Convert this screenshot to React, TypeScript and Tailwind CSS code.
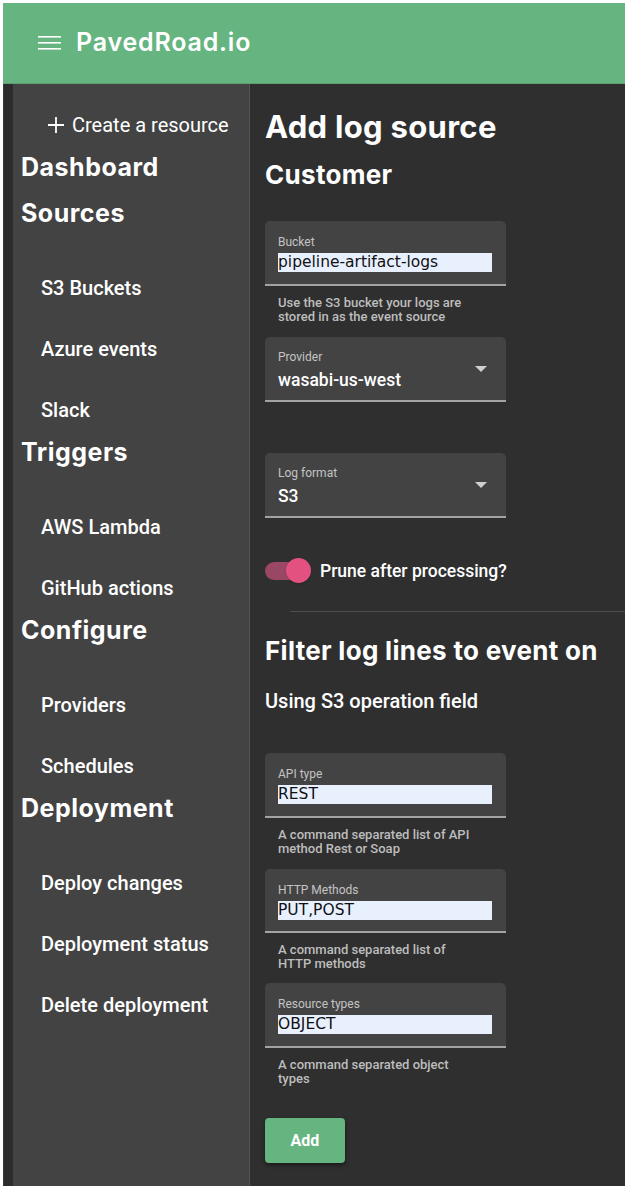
import React from "react";

const HEAD = { fontFamily: "Inter, 'DejaVu Sans', sans-serif" };
const ROBO = { fontFamily: "Roboto, 'Liberation Sans', sans-serif" };
const INPUT = { fontFamily: "'DejaVu Sans', Verdana, sans-serif" };

function SideHeading({ children, mt }: { children: React.ReactNode; mt: string }) {
  return (
    <div className={`h-[26px] flex items-center pl-[8px] text-[25px] font-bold tracking-[0.5px] text-white ${mt}`} style={HEAD}>
      {children}
    </div>
  );
}

function SideItems({ items }: { items: string[] }) {
  return (
    <div className="mt-[30px] flex flex-col">
      {items.map((t) => (
        <div key={t} className="h-[61px] flex items-center pl-[28px] text-[20px] font-medium text-white" style={ROBO}>
          {t}
        </div>
      ))}
    </div>
  );
}

function TextField({ label, value, helper, mt, h = "h-[65px]" }: { label: string; value: string; helper: string[]; mt: string; h?: string }) {
  return (
    <div className={mt}>
      <div className={`w-[241px] ${h} bg-[#434343] rounded-t-[5px] border-b-[2px] border-[#a3a3a3] pl-[13px] pt-[14px]`}>
        <div className="text-[12px] leading-[14px] text-[#c4c4c4]" style={ROBO}>{label}</div>
        <div className="mt-[4px] w-[214px] h-[19px] bg-[#e8f0fe] flex items-center text-[15.5px] text-[#111] leading-[19px]" style={INPUT}>
          {value}
        </div>
      </div>
      <div className="mt-[10px] pl-[13px] text-[13px] leading-[14px] font-medium text-[#bdbdbd]" style={ROBO}>
        {helper.map((h) => (
          <div key={h}>{h}</div>
        ))}
      </div>
    </div>
  );
}

function SelectField({ label, value, mt }: { label: string; value: string; mt: string }) {
  return (
    <div className={`${mt} relative w-[241px] h-[65px] bg-[#434343] rounded-t-[5px] border-b-[2px] border-[#a3a3a3] pl-[13px] pt-[13px]`}>
      <div className="text-[12px] leading-[14px] text-[#c4c4c4]" style={ROBO}>{label}</div>
      <div className="mt-[4px] text-[17.5px] leading-[24px] font-medium text-white" style={ROBO}>{value}</div>
      <svg className="absolute left-[210px] top-[29px]" width="12" height="7" viewBox="0 0 12 7">
        <path d="M0 0 L12 0 L6 6 Z" fill="#d0d0d0" />
      </svg>
    </div>
  );
}

export default function App() {
  return (
    <div className="w-[630px] h-[1186px] bg-white pt-[3px] pl-[3px] pr-[5px] flex flex-col overflow-hidden">
      <div className="h-[81px] bg-[#66b581] border-b border-[#5a9e71] flex items-center pl-[35px]">
        <svg width="24" height="14" viewBox="0 0 24 14" className="mr-[14px]">
          <rect x="0" y="0" width="23" height="1.6" fill="#fff" />
          <rect x="0" y="6" width="23" height="1.6" fill="#fff" />
          <rect x="0" y="12" width="23" height="1.6" fill="#fff" />
        </svg>
        <span className="text-[25px] font-semibold text-white tracking-[0.8px]" style={HEAD}>PavedRoad.io</span>
      </div>
      <div className="flex-1 flex">
        <div className="w-[10px] bg-[#2c2c2c] border-l-[1px] border-[#3a3a3a]" />
        <div className="w-[237px] bg-[#434343] border-r border-[#555] pt-[27px] flex flex-col">
          <div className="h-[28px] flex items-center pl-[34px] text-white text-[20px]" style={ROBO}>
            <svg width="18" height="18" viewBox="0 0 18 18" className="mr-[7px]">
              <path d="M9 1 V17 M1 9 H17" stroke="#fff" strokeWidth="1.8" />
            </svg>
            Create a resource
          </div>
          <SideHeading mt="mt-[16px]">Dashboard</SideHeading>
          <SideHeading mt="mt-[20px]">Sources</SideHeading>
          <SideItems items={["S3 Buckets", "Azure events", "Slack"]} />
          <SideHeading mt="">Triggers</SideHeading>
          <SideItems items={["AWS Lambda", "GitHub actions"]} />
          <SideHeading mt="">Configure</SideHeading>
          <SideItems items={["Providers", "Schedules"]} />
          <SideHeading mt="">Deployment</SideHeading>
          <SideItems items={["Deploy changes", "Deployment status", "Delete deployment"]} />
        </div>
        <div className="flex-1 bg-[#2f2f2f] pl-[15px] pt-[25px] flex flex-col">
          <div className="h-[36px] flex items-center text-[31px] font-bold tracking-[0.3px] text-white" style={HEAD}>Add log source</div>
          <div className="mt-[14px] h-[30px] flex items-center text-[26px] font-bold tracking-[0.3px] text-white" style={HEAD}>Customer</div>
          <TextField
            mt="mt-[32px]"
            label="Bucket"
            value="pipeline-artifact-logs"
            helper={["Use the S3 bucket your logs are", "stored in as the event source"]}
          />
          <SelectField mt="mt-[13px]" label="Provider" value="wasabi-us-west" />
          <SelectField mt="mt-[51px]" label="Log format" value="S3" />
          <div className="mt-[40px] h-[26px] flex items-center">
            <div className="relative w-[46px] h-[26px]">
              <div className="absolute left-0 top-[4px] w-[34px] h-[18px] rounded-full bg-[#9a4766]" />
              <div className="absolute left-[21px] top-0 w-[25px] h-[25px] rounded-full bg-[#e2517f] shadow" />
            </div>
            <span className="ml-[9px] text-[17.5px] font-medium text-white" style={ROBO}>Prune after processing?</span>
          </div>
          <div className="mt-[27px] ml-[25px] h-px bg-[#4e4e4e]" />
          <div className="mt-[23px] h-[30px] flex items-center text-[26px] font-bold tracking-[0.3px] text-white" style={HEAD}>Filter log lines to event on</div>
          <div className="mt-[24px] h-[24px] flex items-center text-[20px] font-medium text-white" style={ROBO}>Using S3 operation field</div>
          <TextField
            mt="mt-[40px]"
            label="API type"
            value="REST"
            helper={["A command separated list of API", "method Rest or Soap"]}
          />
          <TextField
            mt="mt-[13px]"
            h="h-[64px]"
            label="HTTP Methods"
            value="PUT,POST"
            helper={["A command separated list of", "HTTP methods"]}
          />
          <TextField
            mt="mt-[12px]"
            label="Resource types"
            value="OBJECT"
            helper={["A command separated object", "types"]}
          />
          <button
            className="mt-[32px] w-[80px] h-[45px] rounded-[4px] bg-[#66b581] text-white text-[16px] font-bold shadow-[0_2px_4px_rgba(0,0,0,0.5)]"
            style={ROBO}
          >
            Add
          </button>
        </div>
      </div>
    </div>
  );
}
